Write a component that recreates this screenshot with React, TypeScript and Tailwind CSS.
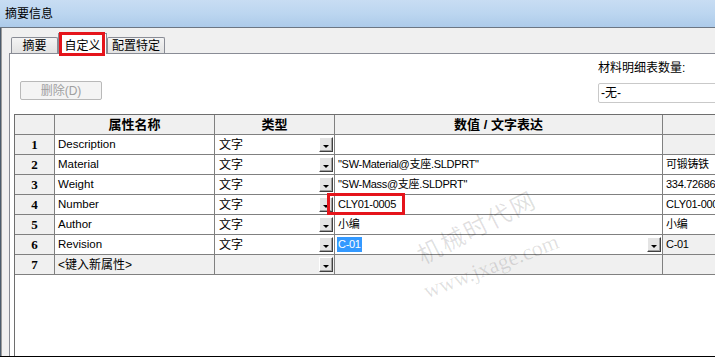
import React from 'react'

// ─── Data ────────────────────────────────────────────────────────────

interface Prop {
  name: string
  type: string
  value: string
  evaluated: string
}

const ROWS: Prop[] = [
  { name: 'Description', type: '文字', value: '', evaluated: '' },
  { name: 'Material', type: '文字', value: '"SW-Material@支座.SLDPRT"', evaluated: '可锻铸铁' },
  { name: 'Weight', type: '文字', value: '"SW-Mass@支座.SLDPRT"', evaluated: '334.72686' },
  { name: 'Number', type: '文字', value: 'CLY01-0005', evaluated: 'CLY01-0005' },
  { name: 'Author', type: '文字', value: '小编', evaluated: '小编' },
  { name: 'Revision', type: '文字', value: 'C-01', evaluated: 'C-01' },
]

const GRID = 'grid grid-cols-[40px_160px_120px_328px_120px]'
const CELL = 'h-[20px] border-r border-b border-[#808080] flex items-center overflow-hidden whitespace-nowrap'
const NARROW = 'text-[11px] tracking-[-0.3px]'

// ─── Component ───────────────────────────────────────────────────────

export default function App() {
  return (
    <div className="relative flex h-[357px] w-[715px] flex-col overflow-hidden border-b border-black bg-[#f0f0f0] font-['Liberation_Sans','Noto_Sans_CJK_SC',sans-serif] text-[12px] text-black">
      {/* Title bar */}
      <div className="flex h-[28px] shrink-0 items-center border-b border-[#6c7683] bg-linear-to-b from-[#c8ddf3] via-[#bcd6f0] to-[#adcbea] pl-[5px] text-[12px]">
        摘要信息
      </div>

      <div className="flex flex-1">
        {/* Window frame */}
        <div className="w-[4px] border-l border-r border-l-[#4b5b6c] border-r-[#9c9c9c] bg-[#a9c7e7]" />

        <div className="flex flex-1 flex-col pl-[7px]">
          {/* Tabs */}
          <div className="flex h-[25px] shrink-0 items-end pl-[2px]">
            <Tab label="摘要" className="w-[47px]" />
            <div className="relative z-10 -mb-px flex h-[21px] w-[49px] items-start justify-center border-l border-r border-t border-[#898c95] bg-white pt-[3px]">
              自定义
              <div className="absolute -top-[2px] left-0 h-[24px] w-[46px] border-[3px] border-[#e5141b]" />
            </div>
            <Tab label="配置特定" className="w-[58px]" />
          </div>

          {/* Panel */}
          <div className="flex flex-1 flex-col border-l border-t border-[#898c95] bg-white">
            <div className="flex h-[60px] shrink-0">
              <div className="ml-[10px] mt-[27px] flex h-[19px] w-[82px] items-center justify-center rounded-[2px] border border-[#b9b9b9] bg-[#f4f4f4] text-[#a0a0a0]">
                删除(D)
              </div>
              <div className="ml-[496px] w-[130px] shrink-0">
                <div className="mt-[6px] h-[16px] leading-[16px]">材料明细表数量:</div>
                <div className="mt-[7px] flex h-[20px] items-center rounded-[2px] border border-[#c9c9c9] bg-white pl-[2px]">
                  -无-
                </div>
              </div>
            </div>

            {/* Property grid */}
            <div className="flex-1 pl-[4px]">
              <div className="h-full border-l border-t border-[#6e6e6e] bg-white">
                <div className={GRID}>
                  <div className={`${CELL} bg-[#f0f0f0]`} />
                  <HeaderCell label="属性名称" />
                  <HeaderCell label="类型" />
                  <HeaderCell label="数值 / 文字表达" />
                  <div className={`${CELL} bg-[#f0f0f0]`} />

                  {ROWS.map((row, i) => (
                    <React.Fragment key={row.name}>
                      <NumCell n={i + 1} />
                      <div className={`${CELL} pl-[3px] text-[11.5px]`}>{row.name}</div>
                      <div className={`${CELL} justify-between pl-[4px] pr-[1px]`}>
                        {row.type}
                        <DropButton />
                      </div>
                      <ValueCell row={row} index={i} />
                      <div
                        className={`${CELL} ${NARROW} pl-[3px] ${i === 0 || i === 5 ? 'bg-[#f0f0f0]' : 'bg-white'}`}
                      >
                        {row.evaluated}
                      </div>
                    </React.Fragment>
                  ))}

                  <NumCell n={7} />
                  <div className={`${CELL} bg-[#f0f0f0] pl-[3px]`}>&lt;键入新属性&gt;</div>
                  <div className={`${CELL} justify-end bg-[#f0f0f0] pr-[1px]`}>
                    <DropButton />
                  </div>
                  <div className={`${CELL} bg-[#f0f0f0]`} />
                  <div className={`${CELL} bg-[#f0f0f0]`} />
                </div>
              </div>
            </div>
          </div>
        </div>
      </div>

      {/* Watermark */}
      <div className="pointer-events-none absolute left-[477px] top-[228px] -translate-x-1/2 -translate-y-1/2 -rotate-[27deg] whitespace-nowrap text-[24px] tracking-[2px] text-black/12">
        机械时代网
      </div>
      <div className="pointer-events-none absolute left-[491px] top-[266px] -translate-x-1/2 -translate-y-1/2 -rotate-[21deg] whitespace-nowrap font-['Liberation_Serif',serif] text-[22px] text-black/12">
        www.jxage.com
      </div>
    </div>
  )
}

// ─── Sub-components ──────────────────────────────────────────────────

function Tab({ label, className }: { label: string; className: string }) {
  return (
    <div
      className={`flex h-[16px] items-center justify-center rounded-t-[2px] border-l border-r border-t border-[#898c95] bg-linear-to-b from-[#f4f4f4] to-[#e2e2e2] ${className}`}
    >
      {label}
    </div>
  )
}

function HeaderCell({ label }: { label: string }) {
  return <div className={`${CELL} justify-center bg-[#f0f0f0] text-[13px] font-bold`}>{label}</div>
}

function NumCell({ n }: { n: number }) {
  return (
    <div className={`${CELL} justify-center bg-[#f0f0f0] font-['Liberation_Serif',serif] text-[13px] font-bold`}>
      {n}
    </div>
  )
}

function ValueCell({ row, index }: { row: Prop; index: number }) {
  if (index === 5) {
    return (
      <div className={`${CELL} ${NARROW} justify-between pl-[2px] pr-[1px]`}>
        <span className="bg-[#3399ff] px-[1px] leading-[15px] text-white">{row.value}</span>
        <DropButton />
      </div>
    )
  }
  return (
    <div className={`${CELL} ${NARROW} relative !overflow-visible pl-[3px]`}>
      {row.value}
      {index === 3 && (
        <div className="absolute -left-[8px] -top-[2px] h-[22px] w-[78px] border-[3px] border-[#e5141b]" />
      )}
    </div>
  )
}

function DropButton() {
  return (
    <div className="flex h-[15px] w-[14px] shrink-0 items-end justify-center border border-b-[#404040] border-l-white border-r-[#404040] border-t-white bg-[#e4e4e4] pb-[3px] shadow-[inset_-1px_-1px_0_#a0a0a0]">
      <div className="h-0 w-0 border-l-[3px] border-r-[3px] border-t-[3px] border-l-transparent border-r-transparent border-t-black" />
    </div>
  )
}
